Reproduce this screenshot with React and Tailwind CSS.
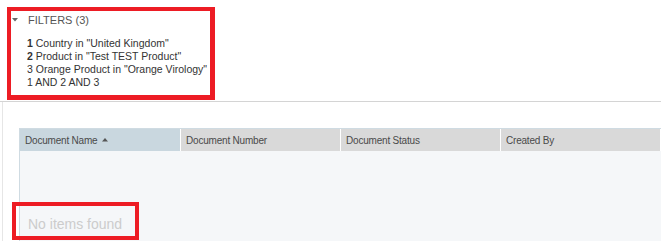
const FILTERS = [
  { n: "1", bold: true, text: 'Country in "United Kingdom"' },
  { n: "2", bold: true, text: 'Product in "Test TEST Product"' },
  { n: "3", bold: false, text: 'Orange Product in "Orange Virology"' },
];

const COLUMNS = ["Document Name", "Document Number", "Document Status", "Created By"];

// Filter summary panel (the red outline is part of the screenshot).
function FilterPanel() {
  return (
    <div className="h-[93px] w-[208px] border-4 border-b-[5px] border-r-[5px] border-[#ed1c24] pl-px pt-[3px]">
      <div className="flex items-center text-[11px] leading-[13px] text-[#555]">
        <svg width="6" height="4" viewBox="0 0 6 4" className="mr-[10px] mt-[-1px]">
          <polygon points="0,0 6,0 3,3.5" fill="#666" />
        </svg>
        <span>FILTERS (3)</span>
      </div>
      <div className="mt-[10px] pl-[15px] text-[10.5px] leading-[13px] text-[#333]">
        {FILTERS.map((f) => (
          <div key={f.n} className="whitespace-nowrap">
            <span className={f.bold ? "font-bold" : ""}>{f.n}</span> {f.text}
          </div>
        ))}
        <div>1 AND 2 AND 3</div>
      </div>
    </div>
  );
}

function DocumentTable() {
  return (
    <div className="flex h-full flex-col border-l border-t border-[#cfdbe2]">
      <div className="flex h-[22px]">
        {COLUMNS.map((c, i) => (
          <div
            key={c}
            className={`flex w-[160px] items-center pl-[5px] text-[10px] tracking-[-0.2px] text-[#4a4a4a] ${
              i === 0 ? "bg-[#c9d7df]" : "border-l border-white bg-[#d9d9d9]"
            }`}
          >
            <span>{c}</span>
            {i === 0 && (
              <svg width="6" height="4" viewBox="0 0 6 4" className="ml-[5px]">
                <polygon points="0,3.5 6,3.5 3,0" fill="#555" />
              </svg>
            )}
          </div>
        ))}
      </div>
      <div className="flex-1 bg-[#f5f7f9] pl-[8px] pt-[64px] text-[14px] leading-[18px] text-[#cccccc]">
        No items found
      </div>
    </div>
  );
}

export default function App() {
  return (
    <div
      className="relative h-[241px] w-[661px] overflow-hidden bg-white"
      style={{ fontFamily: '"Liberation Sans", Arial, sans-serif' }}
    >
      <div className="h-[101px] pl-[7px] pt-[7px]">
        <FilterPanel />
      </div>
      <div className="border-t border-[#d4d4d4]" />
      <div className="ml-[2px] h-[139px] border-l border-[#e6e6e6] pl-[16px] pt-[26px]">
        <DocumentTable />
      </div>
      <div className="pointer-events-none absolute left-[12px] top-[202px] h-[38px] w-[127px] border-4 border-[#ed1c24]" />
    </div>
  );
}
